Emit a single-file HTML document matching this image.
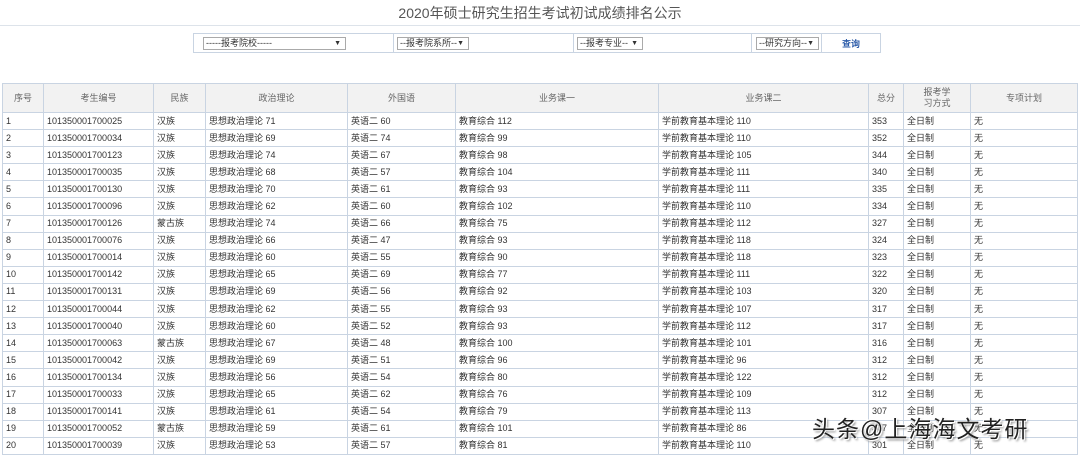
<!DOCTYPE html>
<html><head><meta charset="utf-8"><style>
body{margin:0;width:1080px;height:457px;background:#fff;font-family:"Liberation Sans","Noto Sans CJK SC",sans-serif;color:#333;overflow:hidden;position:relative}
.title{position:absolute;top:3px;left:0;width:1080px;text-align:center;font-size:14px;color:#555}
.hr{position:absolute;top:25px;left:0;width:1080px;height:1px;background:#dde3ea}
.fbox{position:absolute;left:193px;top:33px;width:688px;height:20px;border:1px solid #c9d4e2;box-sizing:border-box}
.dv{position:absolute;top:0;width:1px;height:18px;background:#c9d4e2}
.sel{position:absolute;top:3px;height:13px;border:1px solid #aaa;box-sizing:border-box;font-size:9px;line-height:11px;padding-left:2px;color:#333;background:#fff}
.sel b{position:absolute;right:4px;top:0;font-size:7px}
.q{position:absolute;left:648px;top:3px;font-size:9px;color:#2a5aa8;font-weight:bold}
table{position:absolute;left:2px;top:83px;border-collapse:collapse;font-size:9px;table-layout:fixed}
td,th{border:1px solid #c9d4e2;padding:0 0 0 3px;white-space:nowrap;overflow:hidden}
th{background:#f2f2f2;font-weight:normal;color:#666;text-align:center;height:28px;line-height:11px;padding:0}
td{height:16.1px;line-height:15px}
.wm{position:absolute;left:812px;top:410px;font-size:23px;color:#222;text-shadow:1px 1px 0 #fff,-1px -1px 0 #fff,2px 2px 2px #888;letter-spacing:1px}
</style></head><body>
<div class="title">2020年硕士研究生招生考试初试成绩排名公示</div>
<div class="hr"></div>
<div class="fbox">
<div class="sel" style="left:9px;width:143px">-----报考院校-----<b>▼</b></div>
<div class="dv" style="left:199px"></div>
<div class="sel" style="left:203px;width:72px">--报考院系所--<b>▼</b></div>
<div class="dv" style="left:379px"></div>
<div class="sel" style="left:383px;width:66px">--报考专业--<b>▼</b></div>
<div class="dv" style="left:557px"></div>
<div class="sel" style="left:562px;width:63px">--研究方向--<b>▼</b></div>
<div class="dv" style="left:627px"></div>
<div class="q">查询</div>
</div>
<table>
<colgroup><col style="width:41px"><col style="width:110px"><col style="width:52px"><col style="width:142px"><col style="width:108px"><col style="width:203px"><col style="width:210px"><col style="width:35px"><col style="width:67px"><col style="width:107px"></colgroup>
<tr><th>序号</th><th>考生编号</th><th>民族</th><th>政治理论</th><th>外国语</th><th>业务课一</th><th>业务课二</th><th>总分</th><th>报考学<br>习方式</th><th>专项计划</th></tr>
<tr><td>1</td><td>101350001700025</td><td>汉族</td><td>思想政治理论 71</td><td>英语二 60</td><td>教育综合 112</td><td>学前教育基本理论 110</td><td>353</td><td>全日制</td><td>无</td></tr>
<tr><td>2</td><td>101350001700034</td><td>汉族</td><td>思想政治理论 69</td><td>英语二 74</td><td>教育综合 99</td><td>学前教育基本理论 110</td><td>352</td><td>全日制</td><td>无</td></tr>
<tr><td>3</td><td>101350001700123</td><td>汉族</td><td>思想政治理论 74</td><td>英语二 67</td><td>教育综合 98</td><td>学前教育基本理论 105</td><td>344</td><td>全日制</td><td>无</td></tr>
<tr><td>4</td><td>101350001700035</td><td>汉族</td><td>思想政治理论 68</td><td>英语二 57</td><td>教育综合 104</td><td>学前教育基本理论 111</td><td>340</td><td>全日制</td><td>无</td></tr>
<tr><td>5</td><td>101350001700130</td><td>汉族</td><td>思想政治理论 70</td><td>英语二 61</td><td>教育综合 93</td><td>学前教育基本理论 111</td><td>335</td><td>全日制</td><td>无</td></tr>
<tr><td>6</td><td>101350001700096</td><td>汉族</td><td>思想政治理论 62</td><td>英语二 60</td><td>教育综合 102</td><td>学前教育基本理论 110</td><td>334</td><td>全日制</td><td>无</td></tr>
<tr><td>7</td><td>101350001700126</td><td>蒙古族</td><td>思想政治理论 74</td><td>英语二 66</td><td>教育综合 75</td><td>学前教育基本理论 112</td><td>327</td><td>全日制</td><td>无</td></tr>
<tr><td>8</td><td>101350001700076</td><td>汉族</td><td>思想政治理论 66</td><td>英语二 47</td><td>教育综合 93</td><td>学前教育基本理论 118</td><td>324</td><td>全日制</td><td>无</td></tr>
<tr><td>9</td><td>101350001700014</td><td>汉族</td><td>思想政治理论 60</td><td>英语二 55</td><td>教育综合 90</td><td>学前教育基本理论 118</td><td>323</td><td>全日制</td><td>无</td></tr>
<tr><td>10</td><td>101350001700142</td><td>汉族</td><td>思想政治理论 65</td><td>英语二 69</td><td>教育综合 77</td><td>学前教育基本理论 111</td><td>322</td><td>全日制</td><td>无</td></tr>
<tr><td>11</td><td>101350001700131</td><td>汉族</td><td>思想政治理论 69</td><td>英语二 56</td><td>教育综合 92</td><td>学前教育基本理论 103</td><td>320</td><td>全日制</td><td>无</td></tr>
<tr><td>12</td><td>101350001700044</td><td>汉族</td><td>思想政治理论 62</td><td>英语二 55</td><td>教育综合 93</td><td>学前教育基本理论 107</td><td>317</td><td>全日制</td><td>无</td></tr>
<tr><td>13</td><td>101350001700040</td><td>汉族</td><td>思想政治理论 60</td><td>英语二 52</td><td>教育综合 93</td><td>学前教育基本理论 112</td><td>317</td><td>全日制</td><td>无</td></tr>
<tr><td>14</td><td>101350001700063</td><td>蒙古族</td><td>思想政治理论 67</td><td>英语二 48</td><td>教育综合 100</td><td>学前教育基本理论 101</td><td>316</td><td>全日制</td><td>无</td></tr>
<tr><td>15</td><td>101350001700042</td><td>汉族</td><td>思想政治理论 69</td><td>英语二 51</td><td>教育综合 96</td><td>学前教育基本理论 96</td><td>312</td><td>全日制</td><td>无</td></tr>
<tr><td>16</td><td>101350001700134</td><td>汉族</td><td>思想政治理论 56</td><td>英语二 54</td><td>教育综合 80</td><td>学前教育基本理论 122</td><td>312</td><td>全日制</td><td>无</td></tr>
<tr><td>17</td><td>101350001700033</td><td>汉族</td><td>思想政治理论 65</td><td>英语二 62</td><td>教育综合 76</td><td>学前教育基本理论 109</td><td>312</td><td>全日制</td><td>无</td></tr>
<tr><td>18</td><td>101350001700141</td><td>汉族</td><td>思想政治理论 61</td><td>英语二 54</td><td>教育综合 79</td><td>学前教育基本理论 113</td><td>307</td><td>全日制</td><td>无</td></tr>
<tr><td>19</td><td>101350001700052</td><td>蒙古族</td><td>思想政治理论 59</td><td>英语二 61</td><td>教育综合 101</td><td>学前教育基本理论 86</td><td>307</td><td>全日制</td><td>无</td></tr>
<tr><td>20</td><td>101350001700039</td><td>汉族</td><td>思想政治理论 53</td><td>英语二 57</td><td>教育综合 81</td><td>学前教育基本理论 110</td><td>301</td><td>全日制</td><td>无</td></tr>
</table>
<div class="wm">头条@上海海文考研</div>
</body></html>
